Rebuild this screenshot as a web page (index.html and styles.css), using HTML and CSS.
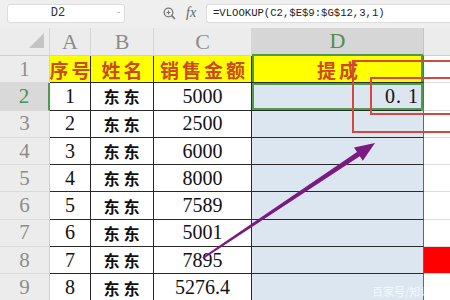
FILE: index.html
```html
<!DOCTYPE html>
<html>
	<head>
		<meta charset="UTF-8">
		<title>VLOOKUP</title>
		<link rel="stylesheet" href="styles.css">
	</head>
	<body>
		<div class="toolbar">
			<div class="namebox"><span class="ref">D2</span><span class="drop">-</span></div>
			<svg class="zoomicon" width="13" height="13" viewBox="0 0 13 13">
				<circle cx="5.5" cy="5.5" r="4.3" fill="none" stroke="#777" stroke-width="1.3"/>
				<path d="M3.5 5.5h4M5.5 3.5v4" stroke="#777" stroke-width="1.1"/>
				<path d="M8.6 8.6l3.4 3.4" stroke="#777" stroke-width="1.6"/>
			</svg>
			<span class="fx">fx</span>
			<div class="formula">=VLOOKUP(C2,$E$9:$G$12,3,1)</div>
		</div>

		<div class="sheet">
			<!-- 列标 -->
			<div class="corner"><span class="tri"></span></div>
			<div class="colhead">A</div>
			<div class="colhead">B</div>
			<div class="colhead">C</div>
			<div class="colhead active">D</div>
			<div class="colhead last"></div>

			<!-- 1 -->
			<div class="rowhead">1</div>
			<div class="cell title">序号</div>
			<div class="cell title">姓名</div>
			<div class="cell title">销售金额</div>
			<div class="cell title dsel">提成</div>
			<div class="cell ecol"></div>

			<!-- 2 -->
			<div class="rowhead active">2</div>
			<div class="cell">1</div>
			<div class="cell name">东东</div>
			<div class="cell">5000</div>
			<div class="cell dcol sel"><span class="val">0.&nbsp;1</span><span class="handle"></span></div>
			<div class="cell ecol"></div>

			<!-- 3 -->
			<div class="rowhead">3</div>
			<div class="cell">2</div>
			<div class="cell name">东东</div>
			<div class="cell">2500</div>
			<div class="cell dcol"></div>
			<div class="cell ecol"></div>

			<!-- 4 -->
			<div class="rowhead">4</div>
			<div class="cell">3</div>
			<div class="cell name">东东</div>
			<div class="cell">6000</div>
			<div class="cell dcol"></div>
			<div class="cell ecol"></div>

			<!-- 5 -->
			<div class="rowhead">5</div>
			<div class="cell">4</div>
			<div class="cell name">东东</div>
			<div class="cell">8000</div>
			<div class="cell dcol"></div>
			<div class="cell ecol"></div>

			<!-- 6 -->
			<div class="rowhead">6</div>
			<div class="cell">5</div>
			<div class="cell name">东东</div>
			<div class="cell">7589</div>
			<div class="cell dcol"></div>
			<div class="cell ecol"></div>

			<!-- 7 -->
			<div class="rowhead">7</div>
			<div class="cell">6</div>
			<div class="cell name">东东</div>
			<div class="cell">5001</div>
			<div class="cell dcol"></div>
			<div class="cell ecol"></div>

			<!-- 8 -->
			<div class="rowhead">8</div>
			<div class="cell">7</div>
			<div class="cell name">东东</div>
			<div class="cell">7895</div>
			<div class="cell dcol"></div>
			<div class="cell ecol red"></div>

			<!-- 9 -->
			<div class="rowhead">9</div>
			<div class="cell">8</div>
			<div class="cell name">东东</div>
			<div class="cell">5276.4</div>
			<div class="cell dcol"></div>
			<div class="cell ecol"></div>
		</div>

		<!-- 标注：红框和箭头 -->
		<svg class="marks" width="450" height="300" viewBox="0 0 450 300">
			<rect x="353" y="61" width="120" height="71" fill="none" stroke="#d4483f" stroke-width="2"/>
			<rect x="371" y="78" width="100" height="36" fill="none" stroke="#d4483f" stroke-width="2"/>
			<polygon points="202.4,257.2 357,152 354,147.4 375,143 362.8,160.8 359.8,156.2 203.6,258.8" fill="#7a1a82"/>
		</svg>
		<div class="watermark">百家号/知识</div>
	</body>
</html>
```

FILE: styles.css
```css
* {
	margin: 0;
	padding: 0;
	box-sizing: border-box;
}

body {
	width: 450px;
	height: 300px;
	overflow: hidden;
	background: #fff;
	font-family: "Liberation Serif", "Noto Sans CJK SC", serif;
}

/* 编辑栏 */
.toolbar {
	height: 28px;
	background: #efefef;
	display: flex;
	align-items: center;
	padding: 0 0 2px 7px;
}

.namebox {
	width: 118px;
	height: 19px;
	background: #fff;
	border: 1px solid #dcdcdc;
	border-radius: 3px;
	display: flex;
	align-items: center;
	font: 12px "Liberation Mono", monospace;
	color: #333;
}

.namebox .ref {
	flex: 1;
	text-align: center;
	padding-right: 8px;
}

.namebox .drop {
	width: 8px;
	font-size: 9px;
	color: #999;
}

.zoomicon {
	margin-left: 38px;
}

.fx {
	margin-left: 10px;
	font: italic 14px "Liberation Serif", serif;
	color: #666;
	width: 20px;
}

.formula {
	flex: 1;
	height: 19px;
	background: #fff;
	border: 1px solid #dcdcdc;
	border-right: none;
	border-radius: 3px 0 0 3px;
	padding-left: 6px;
	font: 10.6px/17px "Liberation Mono", monospace;
	color: #222;
	white-space: nowrap;
}

/* 表格 */
.sheet {
	display: grid;
	grid-template-columns: 50px 41px 63px 98px 172px 26px;
	grid-template-rows: 28px repeat(9, 27.3px);
}

.corner {
	background: #ececec;
	border-right: 1px solid #d6d6d6;
	border-bottom: 1px solid #d0d0d0;
	display: flex;
	align-items: flex-end;
	justify-content: flex-end;
	padding: 0 5px 7px 0;
}

.tri {
	width: 0;
	height: 0;
	border-left: 15px solid transparent;
	border-bottom: 15px solid #c4c4c4;
}

.colhead {
	background: #ececec;
	border-right: 1px solid #d6d6d6;
	border-bottom: 1px solid #d0d0d0;
	color: #8c8c8c;
	font-size: 22px;
	display: flex;
	align-items: center;
	justify-content: center;
}

.colhead.active {
	background: #d6d6d6;
	color: #4d8f4d;
	border-bottom: 2px solid #4c9c4c;
	border-right-color: #c4c4c4;
}

.colhead.last {
	border-right: none;
}

.rowhead {
	background: #ececec;
	border-right: 1px solid #d0d0d0;
	border-bottom: 1px solid #dadada;
	color: #8c8c8c;
	font-size: 21px;
	display: flex;
	align-items: center;
	justify-content: center;
}

.rowhead.active {
	background: #d9d9d9;
	color: #4d8f4d;
	border-right: 2px solid #4c9c4c;
}

.cell {
	border-right: 1px solid #2a2a2a;
	border-bottom: 1px solid #2a2a2a;
	font-size: 20px;
	color: #111;
	display: flex;
	align-items: center;
	justify-content: center;
	position: relative;
}

.title {
	background: #ffff00;
	color: #cc4a1a;
	font: 700 19px "Noto Sans CJK SC", sans-serif;
	letter-spacing: 3px;
	padding-left: 3px;
	white-space: nowrap;
}

.name {
	font: 700 16px "Noto Sans CJK SC", sans-serif;
	letter-spacing: 4px;
	padding-left: 3px;
}

.dcol {
	background: #dce6f1;
	border-right-color: #666;
	justify-content: flex-end;
	padding-right: 4px;
}

.dsel {
	border-right-color: #666;
	box-shadow: inset 2px 0 0 #4c9c4c, inset -2px 0 0 #4c9c4c;
}

.sel {
	box-shadow: inset 0 0 0 2px #4c9c4c;
}

.val {
	letter-spacing: 1px;
}

.handle {
	position: absolute;
	right: -2px;
	bottom: -2px;
	width: 4px;
	height: 4px;
	background: #4c9c4c;
}

.ecol {
	border-right: none;
	border-bottom: 1px solid #dcdcdc;
	background: #fff;
}

.ecol.red {
	background: #ff0000;
}

/* 标注层 */
.marks {
	position: absolute;
	left: 0;
	top: 0;
	pointer-events: none;
}

.watermark {
	position: absolute;
	left: 372px;
	top: 284px;
	font: 11px/14px "Noto Sans CJK SC", sans-serif;
	color: rgba(255, 255, 255, 0.75);
	white-space: nowrap;
}
```
